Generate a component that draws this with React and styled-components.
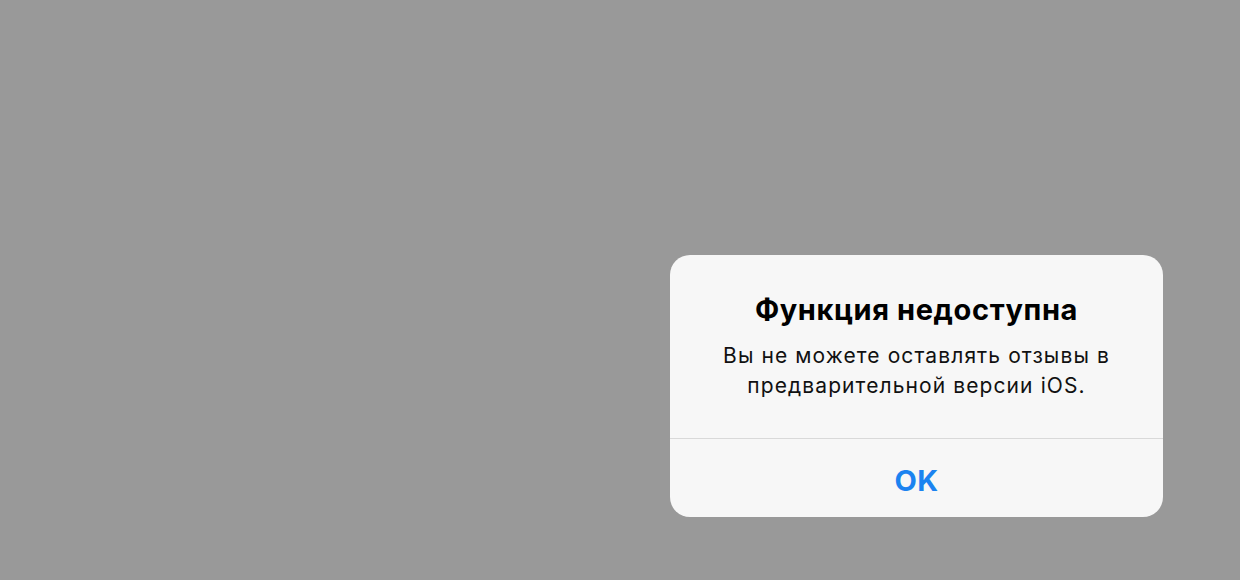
import React from "react";
import styled, { createGlobalStyle } from "styled-components";

const GlobalStyle = createGlobalStyle`
	html, body {
		margin: 0;
		padding: 0;
		background: #999999;
		font-family: Inter, "Noto Sans", sans-serif;
	}
`;

const Screen = styled.div`
	width: 1240px;
	height: 580px;
	display: flex;
	justify-content: flex-end;
	align-items: flex-start;
	padding: 255px 77px 0 0;
	box-sizing: border-box;
	background: #999999;
`;

const Alert = styled.div`
	width: 493px;
	height: 262px;
	background: #f7f7f7;
	border-radius: 20px;
	display: flex;
	flex-direction: column;
	overflow: hidden;
`;

const Content = styled.div`
	height: 183px;
	box-sizing: border-box;
	padding-top: 38px;
	display: flex;
	flex-direction: column;
	align-items: center;
	text-align: center;
`;

const Title = styled.div`
	font-size: 29px;
	font-weight: 700;
	letter-spacing: 0.6px;
	color: #000;
	line-height: 34px;
`;

const Message = styled.div`
	margin-top: 14px;
	font-size: 21px;
	letter-spacing: 1.1px;
	line-height: 30px;
	color: #111;
`;

const Action = styled.button`
	flex: 1;
	border: none;
	border-top: 1px solid #d9d9d9;
	background: transparent;
	font-family: inherit;
	font-size: 29px;
	font-weight: 700;
	letter-spacing: 0.5px;
	color: #1b83f0;
	padding: 4px 0 0;
	cursor: pointer;
`;

export default function App() {
	return (
		<>
			<GlobalStyle />
			<Screen>
				<Alert>
					<Content>
						<Title>Функция недоступна</Title>
						<Message>
							Вы не можете оставлять отзывы в<br />
							предварительной версии iOS.
						</Message>
					</Content>
					<Action>OK</Action>
				</Alert>
			</Screen>
		</>
	);
}
